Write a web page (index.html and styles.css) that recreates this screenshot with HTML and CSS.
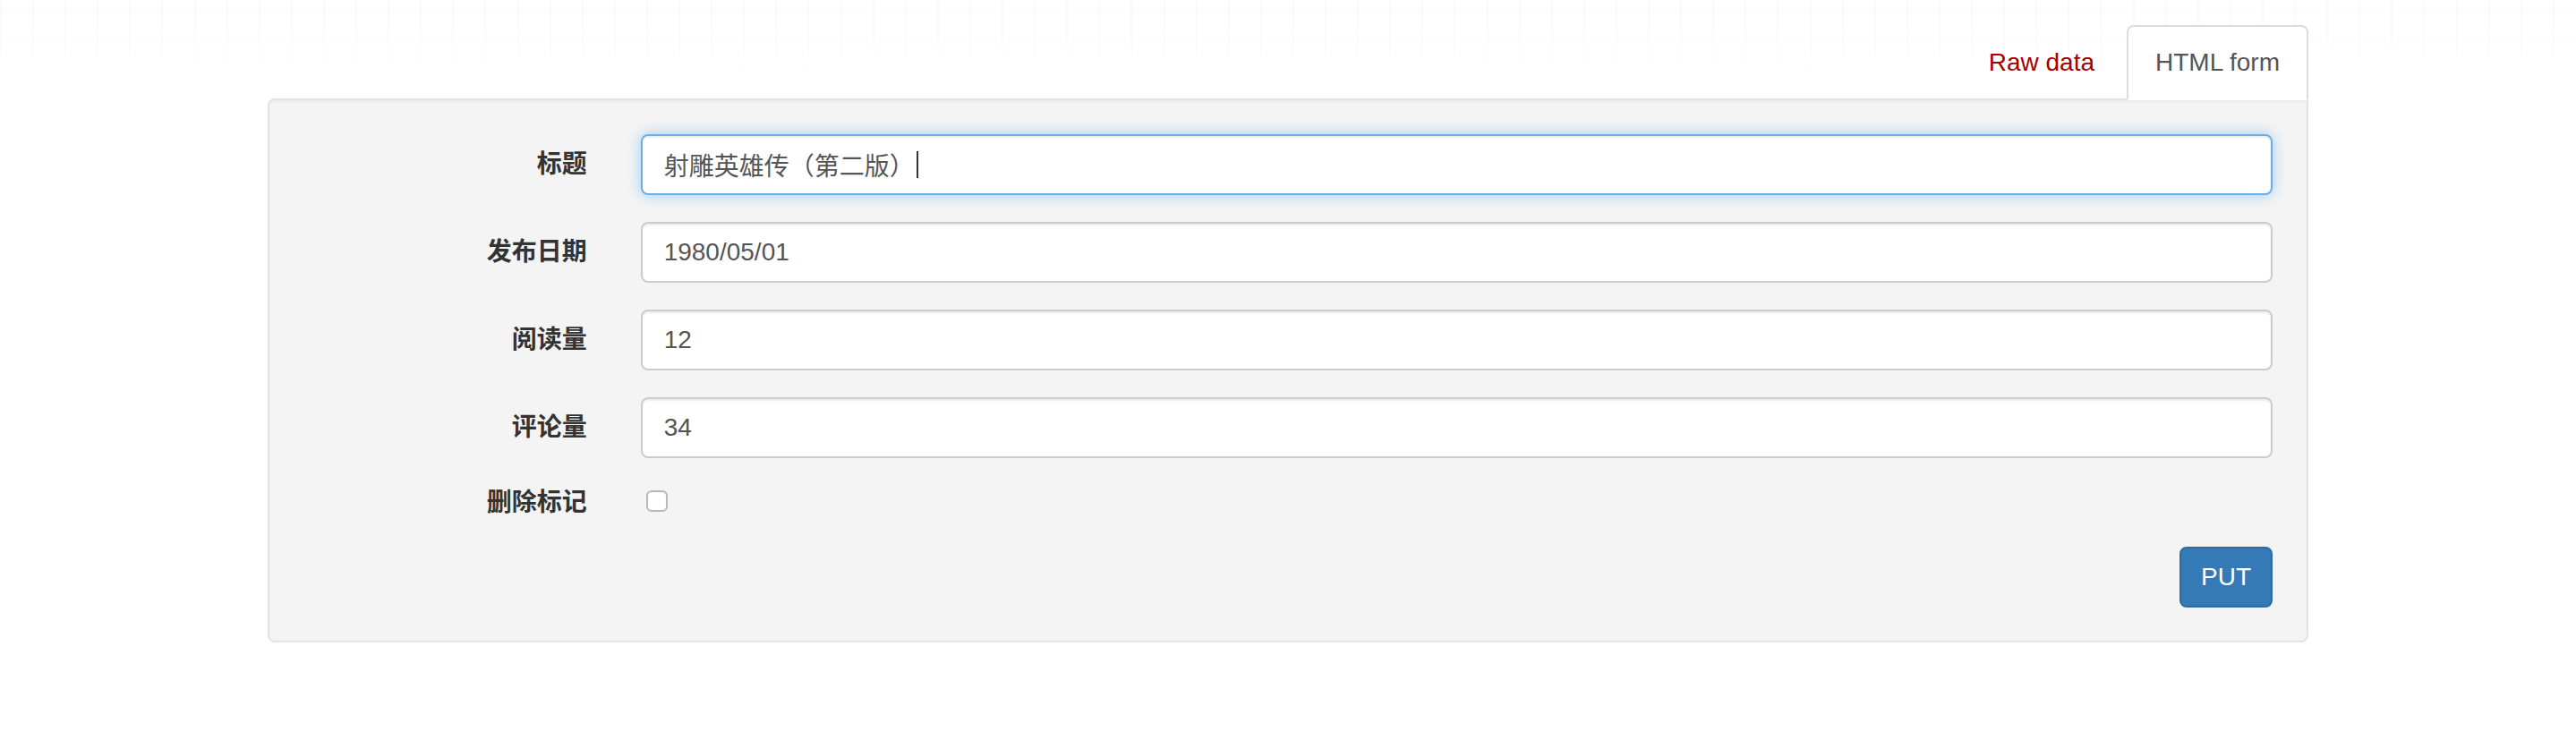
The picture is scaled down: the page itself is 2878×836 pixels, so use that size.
FILE: index.html
```html
<!DOCTYPE html>
<html lang="zh">
<head>
<meta charset="utf-8">
<title>HTML form</title>
<link rel="stylesheet" href="styles.css">
</head>
<body>
<div class="container">
  <ul class="tabs">
    <li class="tab"><a class="tab-link raw">Raw data</a></li>
    <li class="tab active"><a class="tab-link">HTML form</a></li>
  </ul>
  <div class="well">
    <form class="form">
      <div class="form-group">
        <label class="control-label">标题</label>
        <div class="form-control focused"><span class="value">射雕英雄传（第二版）</span><span class="caret"></span></div>
      </div>
      <div class="form-group">
        <label class="control-label">发布日期</label>
        <input class="form-control" type="text" value="1980/05/01">
      </div>
      <div class="form-group">
        <label class="control-label">阅读量</label>
        <input class="form-control" type="text" value="12">
      </div>
      <div class="form-group">
        <label class="control-label">评论量</label>
        <input class="form-control" type="text" value="34">
      </div>
      <div class="form-group checkbox-group">
        <label class="control-label">删除标记</label>
        <div class="checkbox-cell"><input class="checkbox" type="checkbox"></div>
      </div>
      <div class="form-actions">
        <button class="btn btn-primary" type="button">PUT</button>
      </div>
    </form>
  </div>
</div>
</body>
</html>
```
FILE: styles.css
```css
html, body {
  margin: 0;
  padding: 0;
}

body {
  font-family: "Liberation Sans", Arial, "Noto Sans CJK SC", sans-serif;
  font-size: 28px;
  line-height: 40px;
  color: #333;
  background-color: #fff;
  background-image:
    linear-gradient(to bottom, rgba(255,255,255,0) 0px, rgba(255,255,255,0) 25px, #fff 84px),
    linear-gradient(to bottom, transparent 0, transparent 9px, rgba(0,0,0,0.012) 9px, rgba(0,0,0,0.012) 11px, transparent 11px, transparent 46px, rgba(0,0,0,0.012) 46px, rgba(0,0,0,0.012) 48px, transparent 48px),
    repeating-linear-gradient(to right, rgba(0,0,0,0.018) 0, rgba(0,0,0,0.018) 2px, transparent 2px, transparent 36.1px);
  background-size: 100% 84px, 100% 84px, 100% 84px;
  background-repeat: no-repeat;
  background-position: 0 0;
}

.container {
  width: 2340px;
  margin: 0 auto;
  padding: 0 30px;
  box-sizing: border-box;
}

.tabs {
  list-style: none;
  margin: 0;
  padding: 28px 0 0 0;
  display: flex;
  justify-content: flex-end;
}

.tab {
  margin-bottom: -2px;
  position: relative;
  z-index: 1;
}

.tab + .tab {
  margin-left: 4px;
}

.tab-link {
  display: block;
  padding: 20px 30px;
  line-height: 40px;
  border: 2px solid transparent;
  border-radius: 8px 8px 0 0;
  color: #555;
  text-decoration: none;
}

.tab-link.raw {
  color: #a30000;
}

.tab.active .tab-link {
  background: #fff;
  border-color: #ddd;
  border-bottom-color: transparent;
  color: #555;
}

.well {
  background: #f4f4f4;
  border: 2px solid #e3e3e3;
  border-radius: 8px;
  border-top-right-radius: 0;
  padding: 38px;
  padding-bottom: 37px;
  box-shadow: inset 0 2px 2px rgba(0,0,0,0.04);
}

.form {
  margin: 0;
}

.form-group {
  display: grid;
  grid-template-columns: 346.67px 1fr;
  column-gap: 30px;
  margin-bottom: 30px;
}

.control-label {
  font-weight: bold;
  text-align: right;
  padding-top: 14px;
  padding-right: 30px;
  line-height: 40px;
  color: #333;
}

.form-control {
  display: block;
  box-sizing: border-box;
  width: 100%;
  height: 68px;
  margin: 0;
  padding: 12px 24px;
  font-family: "Liberation Sans", Arial, "Noto Sans CJK SC", sans-serif;
  font-size: 28px;
  line-height: 40px;
  color: #555;
  background: #fff;
  border: 2px solid #ccc;
  border-radius: 8px;
  box-shadow: inset 0 2px 2px rgba(0,0,0,0.075);
  outline: none;
}

.form-control.focused {
  border-color: #66afe9;
  box-shadow: inset 0 2px 2px rgba(0,0,0,0.075), 0 0 16px rgba(102,175,233,0.6);
  display: flex;
  align-items: center;
}

.value {
  font-family: "Noto Sans CJK SC", sans-serif;
  color: #555;
  white-space: nowrap;
}

.caret {
  display: inline-block;
  width: 2px;
  height: 30px;
  margin-left: 2px;
  background: #333;
}

.checkbox-group {
  margin-bottom: 29px;
}

.checkbox-group .control-label {
  padding-top: 0;
}

.checkbox-cell {
  display: flex;
  align-items: flex-start;
  padding-left: 6px;
}

.checkbox {
  appearance: none;
  -webkit-appearance: none;
  width: 24px;
  height: 24px;
  margin: 6px 0 0 0;
  background: #fff;
  border: 2px solid #b8b8b8;
  border-radius: 6px;
  box-shadow: inset 0 1px 1px rgba(0,0,0,0.05);
}

.form-actions {
  display: flex;
  justify-content: flex-end;
}

.btn {
  font-family: "Liberation Sans", Arial, sans-serif;
  font-size: 28px;
  line-height: 40px;
  padding: 12px 22px;
  border: 2px solid transparent;
  border-radius: 8px;
  cursor: pointer;
}

.btn-primary {
  color: #fff;
  background: #337ab7;
  border-color: #2e6da4;
}
```
